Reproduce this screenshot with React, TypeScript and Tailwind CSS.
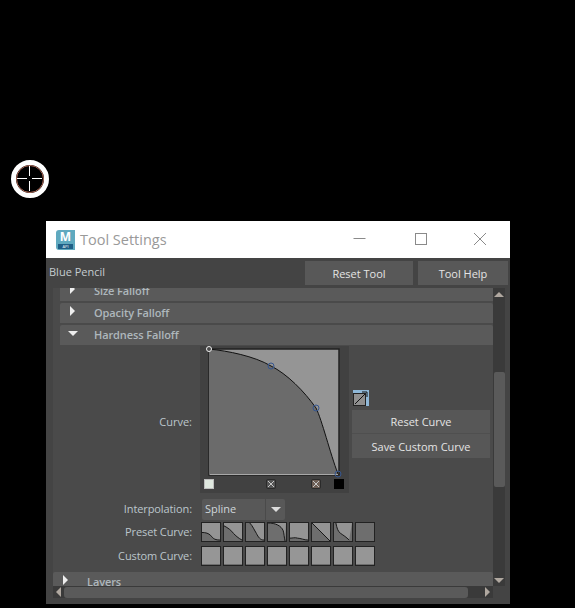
const font = { fontFamily: '"Open Sans", "Noto Sans", sans-serif' }

const presets = [
  'M0 10 C4 10 7 11 9 13 C11 15 12 18 19 18',
  'M0 3 C4 5 8 8 10 11 C12 13 15 16 19 18',
  'M4 0 C7 3 9 8 11 11 C13 15 15 18 19 18',
  'M0 0 C8 0 14 3 16 8 C17 11 17 15 18 19',
  'M0 16 C3 16 5 15 8 16 C11 16 15 18 19 18',
  'M0 0 L19 19',
  'M2 0 C3 5 4 9 7 11 C10 13 13 15 16 18',
  '',
]

function Thumb({ d, flat }: { d?: string; flat?: boolean }) {
  return (
    <div className={`w-5 h-5 border border-[#222222] overflow-hidden shrink-0 ${flat ? 'bg-[#969696]' : 'bg-[#6e6e6e]'}`}>
      <svg width="18" height="18" viewBox="0 0 19 19" className="block">
        {d ? (
          <>
            <path d={`${d} L19 0 L0 0 Z`} fill="#949494" />
            <path d={d} fill="none" stroke="#111111" strokeWidth="1" />
          </>
        ) : null}
        {flat ? <path d="M0 18.5 H19" stroke="#6a6a6a" strokeWidth="1" /> : null}
      </svg>
    </div>
  )
}

function Marker({ color }: { color: string }) {
  return (
    <svg width="10" height="10" viewBox="0 0 10 10" className="block">
      <rect x="0.5" y="0.5" width="9" height="9" rx="1.5" fill={color} stroke="#2a2a2a" />
      <path d="M2 2 L8 8 M8 2 L2 8" stroke="#c8c8c8" strokeWidth="1" />
    </svg>
  )
}

function CurveEditor() {
  const d = 'M1 1 C20 3 46 8 63 18 C79 26 96 43 108 60 C114 72 122 105 130 126'
  return (
    <div className="w-[149px] h-[147px] bg-[#414141] pl-[8px] pt-[2px] shrink-0">
      <svg width="133" height="129" viewBox="0 0 133 129" className="block overflow-visible">
        <rect x="1" y="1" width="130" height="126" fill="#959595" stroke="#222222" strokeWidth="1.5" />
        <path d={`${d} L1 126 Z`} fill="#6b6b6b" />
        <path d="M1.5 126.5 H130" stroke="#a8a8a8" strokeWidth="1" />
        <path d={d} fill="none" stroke="#111111" strokeWidth="1" />
        <circle cx="1" cy="1" r="2.5" fill="#4a4a4a" stroke="#f0f0f0" strokeWidth="1" />
        <circle cx="63" cy="18" r="3" fill="none" stroke="#34558f" strokeWidth="1" />
        <circle cx="108" cy="60" r="3" fill="none" stroke="#34558f" strokeWidth="1" />
        <circle cx="130" cy="126" r="3" fill="none" stroke="#34558f" strokeWidth="1" />
      </svg>
      <div className="h-[10px] w-[140px] mt-[2px] ml-[-4px] flex">
        <div className="w-[10px] h-[10px] bg-[#dfe8df] border border-[#bdbdbd]" />
        <div className="ml-[52px]"><Marker color="#555555" /></div>
        <div className="ml-[35px]"><Marker color="#6f5f55" /></div>
        <div className="ml-[13px] w-[10px] h-[10px] bg-black" />
      </div>
    </div>
  )
}

function SectionRow({ title, open, inset }: { title: string; open?: boolean; inset?: boolean }) {
  return (
    <div className={`h-[20px] bg-[#5a5a5a] rounded-t-[2px] flex items-center shrink-0 ${inset ? 'ml-[7px]' : ''}`}>
      <div className="w-[34px] flex justify-center pb-[4px] pr-[9px]">
        {open ? (
          <div className="w-0 h-0 border-x-[5px] border-x-transparent border-t-[5px] border-t-[#eeeeee]" />
        ) : (
          <div className="w-0 h-0 border-y-[5px] border-y-transparent border-l-[5px] border-l-[#eeeeee]" />
        )}
      </div>
      <span className="text-[11px] font-semibold tracking-[-0.1px] text-[#aeb7bc]" style={font}>{title}</span>
    </div>
  )
}

function Arrow({ dir }: { dir: 'up' | 'down' | 'left' | 'right' }) {
  const cls = {
    up: 'border-x-[5px] border-x-transparent border-b-[5px] border-b-[#b0a8a0]',
    down: 'border-x-[5px] border-x-transparent border-t-[5px] border-t-[#b0a8a0]',
    left: 'border-y-[5px] border-y-transparent border-r-[5px] border-r-[#b0a8a0]',
    right: 'border-y-[5px] border-y-transparent border-l-[5px] border-l-[#b0a8a0]',
  }[dir]
  return <div className={`w-0 h-0 ${cls}`} />
}

function Label({ children }: { children: string }) {
  return <div className="w-[146px] pr-[7px] text-right text-[11px] tracking-[-0.1px] text-[#bcc6cc] shrink-0" style={font}>{children}</div>
}

export default function App() {
  return (
    <div className="w-[575px] h-[608px] bg-black overflow-hidden">
      <div className="pt-[160px] pl-[11px]">
        <div className="w-[38px] h-[38px] rounded-full bg-black border-[5px] border-white flex items-center justify-center">
          <svg width="28" height="28" viewBox="0 0 28 28" className="block">
            <circle cx="14" cy="14" r="13.5" fill="none" stroke="#b06a58" strokeWidth="1" />
            <path d="M1 13.5 H11 M16 13.5 H26 M13.5 1 V11 M13.5 16 V26" stroke="#ffffff" strokeWidth="1" />
          </svg>
        </div>
      </div>

      <div className="ml-[46px] mt-[23px] w-[464px] h-[383px] bg-[#444444] flex flex-col">
        {/* title bar */}
        <div className="h-[37px] bg-white flex items-center shrink-0">
          <div className="ml-[10px] w-[19px] h-[20px] rounded-l-[3px] bg-[#5fa9bf] flex flex-col items-center">
            <span className="text-[12px] leading-[14px] font-bold text-white" style={font}>M</span>
            <span className="mt-auto mb-[1px] w-[15px] h-[5px] bg-[#1f5f86] text-[4px] leading-[5px] text-center text-white" style={font}>API</span>
          </div>
          <span className="ml-[5px] text-[14.5px] text-[#999999]" style={font}>Tool Settings</span>
          <svg width="150" height="37" viewBox="0 0 150 37" className="ml-auto mr-[14px] block">
            <path d="M7.5 17.5 H19.5" stroke="#8a8a8a" />
            <rect x="69.5" y="12.5" width="11" height="11" fill="none" stroke="#8a8a8a" />
            <path d="M128 12 L140 24 M140 12 L128 24" stroke="#8a8a8a" />
          </svg>
        </div>

        {/* tool name and actions */}
        <div className="h-[30px] flex items-center shrink-0 pl-[3px] pr-[2px]">
          <span className="text-[11px] text-[#c4ccd0] mb-[2px]" style={font}>Blue Pencil</span>
          <button className="ml-auto w-[108px] h-[24px] pt-[2px] bg-[#585858] text-[11px] text-[#e4e4e4]" style={font}>Reset Tool</button>
          <button className="ml-[5px] w-[90px] h-[24px] pt-[2px] bg-[#585858] text-[11px] text-[#e4e4e4]" style={font}>Tool Help</button>
        </div>

        {/* scroll area */}
        <div className="flex flex-1 min-h-0 pl-[7px] pr-[5px] pb-[5px]">
          <div className="flex-1 min-w-0 flex flex-col">
            <div className="flex">
              <div className="flex-1 min-w-0 h-[298px] overflow-hidden flex flex-col bg-[#4a4a4a]">
                <div className="mt-[-7px] flex flex-col gap-[2px] shrink-0">
                  <SectionRow title="Size Falloff" inset />
                  <SectionRow title="Opacity Falloff" inset />
                  <SectionRow title="Hardness Falloff" open inset />
                </div>
                <div className="flex items-start mt-[1px] shrink-0">
                  <div className="w-[147px] self-center pt-[6px] pr-[8px] text-right text-[11px] text-[#bcc6cc]" style={font}>Curve:</div>
                  <CurveEditor />
                  <div className="ml-[3px] w-[138px] pt-[44px] flex flex-col">
                    <svg width="16" height="16" viewBox="0 0 16 16" className="block ml-[1px] mb-[4px]">
                      <rect width="16" height="16" fill="#8fb8d8" />
                      <rect x="0.5" y="3.5" width="12" height="12" fill="#8f8f8f" stroke="#222222" />
                      <path d="M2 14 L12 4 M9 2 H14 V7" fill="none" stroke="#111111" />
                    </svg>
                    <button className="h-[24px] pt-[2px] bg-[#575757] text-[11px] text-[#e4e4e4] border-b border-[#4f4f4f]" style={font}>Reset Curve</button>
                    <button className="h-[24px] pt-[2px] bg-[#575757] text-[11px] text-[#e4e4e4]" style={font}>Save Custom Curve</button>
                  </div>
                </div>
                <div className="flex items-center mt-[6px] h-[21px] shrink-0">
                  <Label>Interpolation:</Label>
                  <div className="ml-[3px] w-[83px] h-[21px] bg-[#585858] rounded-[2px] flex items-center text-[11px] text-[#cfd6da]" style={font}>
                    <span className="flex-1 pl-[3px]">Spline</span>
                    <div className="w-[20px] h-full border-l border-[#4a4a4a] flex items-center justify-center">
                      <div className="w-0 h-0 border-x-[5px] border-x-transparent border-t-[5px] border-t-[#dddddd]" />
                    </div>
                  </div>
                </div>
                <div className="flex items-center mt-[1px] h-[22px] shrink-0">
                  <Label>Preset Curve:</Label>
                  <div className="ml-[2px] flex gap-[2px]">
                    {presets.map((d, i) => <Thumb key={i} d={d} />)}
                  </div>
                </div>
                <div className="flex items-center mt-[2px] h-[22px] shrink-0">
                  <Label>Custom Curve:</Label>
                  <div className="ml-[2px] flex gap-[2px]">
                    {presets.map((_, i) => <Thumb key={i} flat />)}
                  </div>
                </div>
                <div className="mt-[5px] shrink-0">
                  <SectionRow title="Layers" />
                </div>
              </div>
              <div className="w-[12px] bg-[#3a3a3a] flex flex-col items-center shrink-0">
                <div className="h-[12px] flex items-center"><Arrow dir="up" /></div>
                <div className="mt-[72px] w-[11px] h-[115px] rounded-[2px] bg-[#5a5a5a]" />
                <div className="mt-auto h-[12px] flex items-center"><Arrow dir="down" /></div>
              </div>
            </div>
            <div className="h-[12px] bg-[#3a3a3a] flex items-center mr-[12px]">
              <div className="w-[11px] flex justify-center"><Arrow dir="left" /></div>
              <div className="w-[404px] h-[11px] rounded-[3px] bg-[#5a5a5a]" />
              <div className="ml-auto w-[12px] flex justify-center"><Arrow dir="right" /></div>
            </div>
          </div>
        </div>
      </div>
    </div>
  )
}
